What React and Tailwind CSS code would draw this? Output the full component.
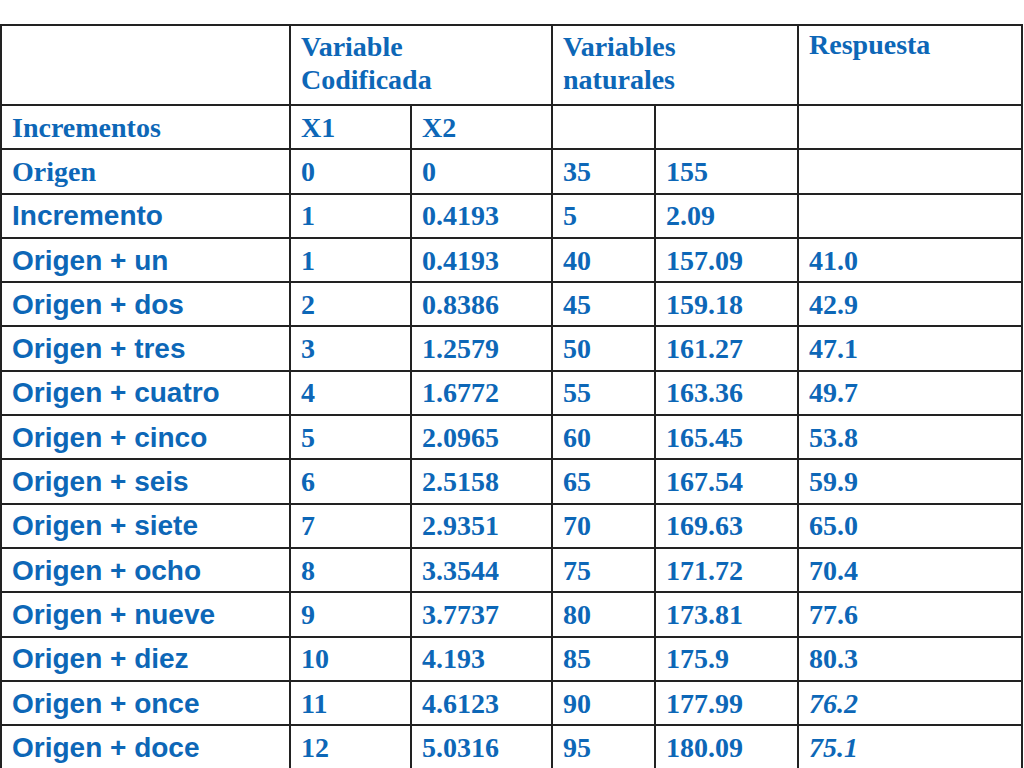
const serif = { fontFamily: '"Liberation Serif", "Times New Roman", serif' };
const sans = { fontFamily: '"Liberation Sans", Arial, sans-serif' };

const rows = [
  ["Origen + un", "1", "0.4193", "40", "157.09", "41.0"],
  ["Origen + dos", "2", "0.8386", "45", "159.18", "42.9"],
  ["Origen + tres", "3", "1.2579", "50", "161.27", "47.1"],
  ["Origen + cuatro", "4", "1.6772", "55", "163.36", "49.7"],
  ["Origen + cinco", "5", "2.0965", "60", "165.45", "53.8"],
  ["Origen + seis", "6", "2.5158", "65", "167.54", "59.9"],
  ["Origen + siete", "7", "2.9351", "70", "169.63", "65.0"],
  ["Origen + ocho", "8", "3.3544", "75", "171.72", "70.4"],
  ["Origen + nueve", "9", "3.7737", "80", "173.81", "77.6"],
  ["Origen + diez", "10", "4.193", "85", "175.9", "80.3"],
  ["Origen + once", "11", "4.6123", "90", "177.99", "76.2", true],
  ["Origen + doce", "12", "5.0316", "95", "180.09", "75.1", true],
];

const Cell = ({ children, className = "" }) => (
  <td
    className={"border-2 border-[#222] pl-[10px] align-middle font-bold font-serif " + className}
    style={serif}
  >
    {children}
  </td>
);

const App = () => {
  return (
    <div className="w-[1024px] h-[768px] bg-white overflow-hidden pt-[24px] text-[#0d67b7]">
      <table className="border-collapse w-[1021px] table-fixed text-[28px] leading-[33px]">
        <colgroup>
          <col className="w-[289px]" />
          <col className="w-[121px]" />
          <col className="w-[141px]" />
          <col className="w-[103px]" />
          <col className="w-[143px]" />
          <col className="w-[224px]" />
        </colgroup>
        <tbody>
          <tr className="h-[80px]">
            <Cell />
            <td colSpan={2} className="border-2 border-[#222] pl-[10px] pt-[4px] align-top font-bold" style={serif}>
              Variable
              <br />
              Codificada
            </td>
            <td colSpan={2} className="border-2 border-[#222] pl-[10px] pt-[4px] align-top font-bold" style={serif}>
              Variables
              <br />
              naturales
            </td>
            <td className="border-2 border-[#222] pl-[10px] pt-[2px] align-top font-bold" style={serif}>
              Respuesta
            </td>
          </tr>
          <tr className="h-[44.3px]">
            <Cell>Incrementos</Cell>
            <Cell>X1</Cell>
            <Cell>X2</Cell>
            <Cell />
            <Cell />
            <Cell />
          </tr>
          <tr className="h-[44.3px]">
            <Cell>Origen</Cell>
            <Cell>0</Cell>
            <Cell>0</Cell>
            <Cell>35</Cell>
            <Cell>155</Cell>
            <Cell />
          </tr>
          <tr className="h-[44.3px]">
            <td className="border-2 border-[#222] pl-[10px] align-middle font-bold" style={sans}>
              Incremento
            </td>
            <Cell>1</Cell>
            <Cell>0.4193</Cell>
            <Cell>5</Cell>
            <Cell>2.09</Cell>
            <Cell />
          </tr>
          {rows.map((r) => (
            <tr key={r[0]} className="h-[44.3px]">
              <td className="border-2 border-[#222] pl-[10px] align-middle font-bold" style={sans}>
                {r[0]}
              </td>
              <Cell>{r[1]}</Cell>
              <Cell>{r[2]}</Cell>
              <Cell>{r[3]}</Cell>
              <Cell>{r[4]}</Cell>
              <Cell className={r[6] ? "italic" : ""}>{r[5]}</Cell>
            </tr>
          ))}
        </tbody>
      </table>
    </div>
  );
};

export default App;
